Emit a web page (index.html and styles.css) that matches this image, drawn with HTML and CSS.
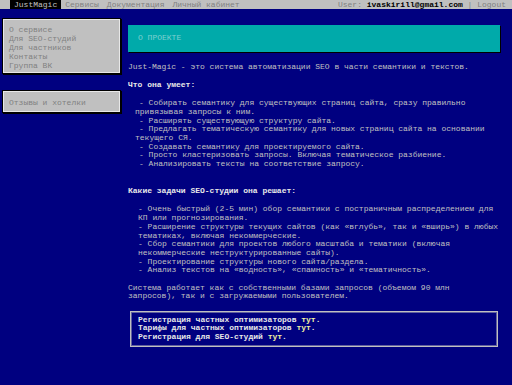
FILE: index.html
```html
<!DOCTYPE html>
<html lang="ru">
<head>
    <meta charset="UTF-8">
    <title>JustMagic - О проекте</title>
    <link rel="stylesheet" href="styles.css">
</head>
<body>
    <div class="topbar">
        <div class="menu">
            <a class="menu-item logo" href="#">JustMagic</a>
            <a class="menu-item" href="#">Сервисы</a>
            <a class="menu-item" href="#">Документация</a>
            <a class="menu-item" href="#">Личный кабинет</a>
        </div>
        <div class="user">
            User: <b>ivaskirill@gmail.com</b> | Logout
        </div>
    </div>

    <div class="layout">
        <div class="sidebar">
            <div class="panel">
                <a href="#">О сервисе</a>
                <a href="#">Для SEO-студий</a>
                <a href="#">Для частников</a>
                <a href="#">Контакты</a>
                <a href="#">Группа ВК</a>
            </div>
            <div class="panel panel-single">
                <a href="#">Отзывы и хотелки</a>
            </div>
        </div>

        <div class="content">
            <div class="title-bar">О ПРОЕКТЕ</div>

            <p>Just-Magic - это система автоматизации SEO в части семантики и текстов.</p>

            <h3>Что она умеет:</h3>
            <ul class="list list-first">
                <li>- Собирать семантику для существующих страниц сайта, сразу правильно привязывая запросы к ним.</li>
                <li>- Расширять существующую структуру сайта.</li>
                <li>- Предлагать тематическую семантику для новых страниц сайта на основании текущего СЯ.</li>
                <li>- Создавать семантику для проектируемого сайта.</li>
                <li>- Просто кластеризовать запросы. Включая тематическое разбиение.</li>
                <li>- Анализировать тексты на соответствие запросу.</li>
            </ul>

            <h3 class="spaced">Какие задачи SEO-студии она решает:</h3>
            <ul class="list">
                <li>- Очень быстрый (2-5 мин) обор семантики с постраничным распределением для КП или прогнозирования.</li>
                <li>- Расширение структуры текущих сайтов (как «вглубь», так и «вширь») в любых тематиках, включая некоммерческие.</li>
                <li>- Сбор семантики для проектов любого масштаба и тематики (включая некоммерческие неструктурированные сайты).</li>
                <li>- Проектирование структуры нового сайта/раздела.</li>
                <li>- Анализ текстов на «водность», «спамность» и «тематичность».</li>
            </ul>

            <p>Система работает как с собственными базами запросов (объемом 90 млн запросов), так и с загружаемыми пользователем.</p>

            <div class="signup">
                <div>Регистрация частных оптимизаторов <a href="#">тут</a>.</div>
                <div>Тарифы для частных оптимизаторов <a href="#">тут</a>.</div>
                <div>Регистрация для SEO-студий <a href="#">тут</a>.</div>
            </div>
        </div>
    </div>
</body>
</html>
```

FILE: styles.css
```css
:root {
    --line: 8.7px;
    --gap: 9.6px;
    --navy: #000080;
    --gray: #c0c0c0;
    --gray-dark: #808080;
    --cyan: #00aaaa;
}

* {
    margin: 0;
    padding: 0;
    box-sizing: border-box;
}

body {
    background: var(--navy);
    color: var(--gray);
    font-family: "Liberation Mono", "Courier New", monospace;
    font-size: 8px;
    line-height: var(--line);
}

a {
    color: inherit;
    text-decoration: none;
}

/* Top menu bar */
.topbar {
    display: flex;
    justify-content: space-between;
    height: 9px;
    line-height: 9px;
    background: var(--gray);
    color: var(--gray-dark);
    padding: 0 6px 0 10px;
}

.menu {
    display: flex;
}

.menu-item {
    padding: 0 4px;
}

.menu-item.logo {
    background: #000;
    color: var(--gray);
}

.user b {
    color: #000;
}

/* Page */
.layout {
    display: flex;
    align-items: flex-start;
}

.sidebar {
    width: 119px;
    margin: 9px 0 0 2px;
}

.panel {
    display: flex;
    flex-direction: column;
    line-height: 9px;
    background: var(--gray);
    color: var(--gray-dark);
    border: 1px solid #000;
    box-shadow: inset 0 0 0 1px #e8e8e8, 1px 1px 0 #000;
    padding: 6px 6px 3px;
    margin-bottom: 16px;
}

.panel-single {
    padding: 7px 6px 5px;
}

.content {
    width: 372px;
    margin: 16px 0 0 7px;
}

.title-bar {
    background: var(--cyan);
    color: #7fd0d0;
    padding: 9px 10px;
    height: 27px;
    box-shadow: 1px 1px 0 #000;
    margin-bottom: 10.5px;
}

.content p {
    margin-bottom: var(--gap);
}

.content h3 {
    font-size: 8px;
    font-weight: bold;
    color: #e8e8e8;
    margin-bottom: var(--gap);
}

.content h3.spaced {
    margin-top: calc(var(--line) * 2 + 1px);
}

.list {
    list-style: none;
    padding-left: 10px;
    margin-bottom: 8.7px;
}

.list-first {
    padding-left: 7px;
}

.list-first li {
    text-indent: 4px;
}

.signup {
    margin: 6px 2px 0;
    border: 1px solid var(--gray);
    box-shadow: inset 0 0 0 1px #6060a0;
    padding: 4px 7px 4px;
    font-weight: bold;
    color: #e8e8e8;
}

.signup a {
    color: #f0f0a0;
}
```
